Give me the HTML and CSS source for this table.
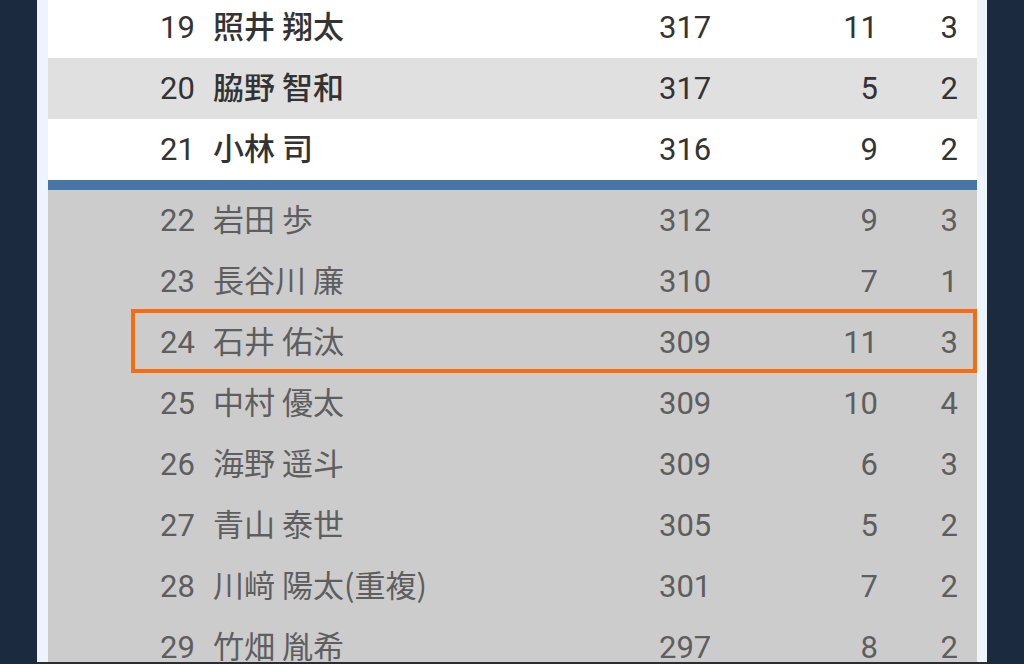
FILE: index.html
```html
<!DOCTYPE html>
<html lang="ja">
<head>
<meta charset="utf-8">
<link rel="stylesheet" href="styles.css">
</head>
<body>
<div class="frame">
  <div class="panel">
    <div class="list">
      <div class="row top first"><span class="rank">19</span><span class="name">照井 翔太</span><span class="score">317</span><span class="c4">11</span><span class="c5">3</span></div>
      <div class="row top alt"><span class="rank">20</span><span class="name">脇野 智和</span><span class="score">317</span><span class="c4">5</span><span class="c5">2</span></div>
      <div class="row top"><span class="rank">21</span><span class="name">小林 司</span><span class="score">316</span><span class="c4">9</span><span class="c5">2</span></div>
      <div class="divider"></div>
      <div class="row low"><span class="rank">22</span><span class="name">岩田 歩</span><span class="score">312</span><span class="c4">9</span><span class="c5">3</span></div>
      <div class="row low"><span class="rank">23</span><span class="name">長谷川 廉</span><span class="score">310</span><span class="c4">7</span><span class="c5">1</span></div>
      <div class="row low marked"><span class="rank">24</span><span class="name">石井 佑汰</span><span class="score">309</span><span class="c4">11</span><span class="c5">3</span></div>
      <div class="row low"><span class="rank">25</span><span class="name">中村 優太</span><span class="score">309</span><span class="c4">10</span><span class="c5">4</span></div>
      <div class="row low"><span class="rank">26</span><span class="name">海野 遥斗</span><span class="score">309</span><span class="c4">6</span><span class="c5">3</span></div>
      <div class="row low"><span class="rank">27</span><span class="name">青山 泰世</span><span class="score">305</span><span class="c4">5</span><span class="c5">2</span></div>
      <div class="row low"><span class="rank">28</span><span class="name">川﨑 陽太(重複)</span><span class="score">301</span><span class="c4">7</span><span class="c5">2</span></div>
      <div class="row low"><span class="rank">29</span><span class="name">竹畑 胤希</span><span class="score">297</span><span class="c4">8</span><span class="c5">2</span></div>
    </div>
  </div>
</div>
</body>
</html>
```

FILE: styles.css
```css
html, body {
  margin: 0;
  padding: 0;
  background: #1b2a3e;
  width: 1024px;
  height: 664px;
  overflow: hidden;
}

.frame {
  margin-left: 37px;
  width: 950px;
  height: 664px;
  box-sizing: border-box;
  padding: 0 10px 0 11px;
  background: #eef4fb;
  border-bottom: 2px solid #2a2d33;
  overflow: hidden;
}

.panel {
  height: 100%;
  overflow: hidden;
  background: #cccccc;
}

.list {
  margin-top: -3px;
}

.row {
  display: grid;
  grid-template-columns: 53px 1fr 120px 99px 80px;
  align-items: center;
  height: 61px;
  padding: 0 19px 0 112px;
  font-family: Roboto, "Noto Sans CJK JP", sans-serif;
  font-size: 31px;
  line-height: 1;
  position: relative;
}

.row .name {
  font-family: "Noto Sans CJK JP", sans-serif;
  font-size: 31px;
  padding-bottom: 6px;
}

.row .c4, .row .c5 {
  text-align: right;
}

.top {
  background: #ffffff;
  color: #333333;
}

.top .name {
  font-weight: 500;
}

.top.alt {
  background: #e0e0e0;
}

.divider {
  height: 10px;
  background: #4676a6;
}

.low {
  background: #cccccc;
  color: #5e5e5e;
}

.marked::after {
  content: "";
  position: absolute;
  top: -3px;
  left: 83px;
  right: 0;
  bottom: 0;
  border: 4px solid #f86c10;
}
```
